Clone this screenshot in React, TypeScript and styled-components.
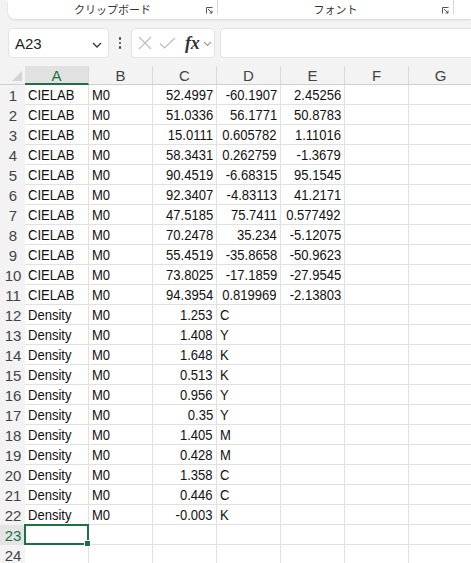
import React from "react";
import styled, { createGlobalStyle } from "styled-components";

const Global = createGlobalStyle`
  html, body { margin: 0; padding: 0; background: #f3f3f3; overflow: hidden; }
  #root { width: 471px; height: 563px; overflow: hidden; }
`;

const Page = styled.div`
  width: 471px;
  height: 563px;
  background: #f3f3f3;
  display: flex;
  flex-direction: column;
  overflow: hidden;
  font-family: "Liberation Sans", Arial, sans-serif;
`;

const Ribbon = styled.div`
  margin-left: 8px;
  height: 19px;
  background: #ffffff;
  border-radius: 0 0 0 7px;
  box-shadow: 0 1px 2px rgba(0, 0, 0, 0.12);
  display: flex;
  align-items: stretch;
  flex-shrink: 0;
`;

const RibbonGroup = styled.div<{ $w: number }>`
  width: ${(p) => p.$w}px;
  flex-shrink: 0;
  position: relative;
  display: flex;
  justify-content: center;
  align-items: center;
  font-family: "Noto Sans CJK JP", sans-serif;
  font-size: 11px;
  color: #333;
  padding-bottom: 2px;
  box-sizing: border-box;
`;

const Sep = styled.div`
  width: 1px;
  height: 14px;
  background: #d6d6d6;
  flex-shrink: 0;
`;

const Launcher = styled.svg`
  position: absolute;
  right: 4px;
  top: 7px;
`;

const FormulaBar = styled.div`
  margin: 9px 0 0 8px;
  height: 30px;
  display: flex;
  align-items: stretch;
  flex-shrink: 0;
`;

const Box = styled.div<{ $w?: number }>`
  background: #fff;
  border: 1px solid #e3e3e3;
  border-radius: 4px;
  box-sizing: border-box;
  ${(p) => (p.$w ? `width: ${p.$w}px; flex-shrink: 0;` : "flex: 1; border-right: none; border-radius: 4px 0 0 4px;")}
  display: flex;
  align-items: center;
`;

const NameText = styled.span`
  font-size: 15px;
  color: #222;
  padding-left: 6px;
  flex: 1;
`;

const Dots = styled.div`
  width: 22px;
  flex-shrink: 0;
  display: flex;
  flex-direction: column;
  align-items: center;
  justify-content: center;
  gap: 2px;
  & span {
    width: 2.5px;
    height: 2.5px;
    border-radius: 50%;
    background: #444;
  }
`;

const Fx = styled.span`
  font-family: "Liberation Serif", serif;
  font-style: italic;
  font-weight: bold;
  font-size: 18px;
  color: #333;
  margin-left: 9px;
  letter-spacing: -0.3px;
`;

const Gap = styled.div<{ $w: number }>`
  width: ${(p) => p.$w}px;
  flex-shrink: 0;
`;

const Sheet = styled.div`
  margin-top: 8px;
  display: grid;
  grid-template-columns: 25px repeat(7, 64px);
  grid-auto-rows: 20px;
  grid-template-rows: 19px;
`;

const Corner = styled.div`
  position: relative;
  border-bottom: 1px solid #d0d0d0;
  box-sizing: border-box;
  &::after {
    content: "";
    position: absolute;
    right: 3px;
    bottom: 3px;
    width: 0;
    height: 0;
    border-left: 10px solid transparent;
    border-bottom: 10px solid #d4d4d4;
  }
`;

const ColHead = styled.div<{ $sel?: boolean }>`
  box-sizing: border-box;
  background: ${(p) => (p.$sel ? "#e1e1e1" : "transparent")};
  border-right: 1px solid #dadada;
  border-bottom: ${(p) => (p.$sel ? "2px solid #1e7145" : "1px solid #d0d0d0")};
  color: ${(p) => (p.$sel ? "#1e7145" : "#444")};
  font-size: 15px;
  display: flex;
  align-items: center;
  justify-content: center;
  padding-top: ${(p) => (p.$sel ? "1px" : "0")};
`;

const RowHead = styled.div<{ $sel?: boolean }>`
  box-sizing: border-box;
  background: ${(p) => (p.$sel ? "#e4e4e4" : "transparent")};
  color: ${(p) => (p.$sel ? "#1e7145" : "#444")};
  font-size: 15px;
  display: flex;
  align-items: center;
  justify-content: center;
  padding-left: 1px;
`;

const Cell = styled.div<{ $align?: "left" | "right"; $sel?: boolean }>`
  box-sizing: border-box;
  background: #fff;
  border-right: 1px solid #e1e1e1;
  border-bottom: 1px solid #e1e1e1;
  font-size: 15px;
  color: #111;
  display: flex;
  align-items: center;
  justify-content: ${(p) => (p.$align === "right" ? "flex-end" : "flex-start")};
  padding: 0 3px;
  white-space: nowrap;
  overflow: visible;
  position: relative;
  ${(p) =>
    p.$sel
      ? `
    &::after {
      content: "";
      position: absolute;
      left: -1px; top: -1px; right: -1px; bottom: -1px;
      border: 2px solid #1e7145;
    }
    &::before {
      content: "";
      position: absolute;
      right: -3px; bottom: -3px;
      width: 5px; height: 5px;
      background: #1e7145;
      border: 1px solid #fff;
      z-index: 2;
    }`
      : ""}
`;

const Txt = styled.span<{ $align?: "left" | "right" }>`
  display: inline-block;
  transform: scaleX(0.87);
  transform-origin: ${(p) => (p.$align === "right" ? "right" : "left")} center;
`;

type Row = [string, string, string, string, string];

const rows: Row[] = [
  ["CIELAB", "M0", "52.4997", "-60.1907", "2.45256"],
  ["CIELAB", "M0", "51.0336", "56.1771", "50.8783"],
  ["CIELAB", "M0", "15.0111", "0.605782", "1.11016"],
  ["CIELAB", "M0", "58.3431", "0.262759", "-1.3679"],
  ["CIELAB", "M0", "90.4519", "-6.68315", "95.1545"],
  ["CIELAB", "M0", "92.3407", "-4.83113", "41.2171"],
  ["CIELAB", "M0", "47.5185", "75.7411", "0.577492"],
  ["CIELAB", "M0", "70.2478", "35.234", "-5.12075"],
  ["CIELAB", "M0", "55.4519", "-35.8658", "-50.9623"],
  ["CIELAB", "M0", "73.8025", "-17.1859", "-27.9545"],
  ["CIELAB", "M0", "94.3954", "0.819969", "-2.13803"],
  ["Density", "M0", "1.253", "C", ""],
  ["Density", "M0", "1.408", "Y", ""],
  ["Density", "M0", "1.648", "K", ""],
  ["Density", "M0", "0.513", "K", ""],
  ["Density", "M0", "0.956", "Y", ""],
  ["Density", "M0", "0.35", "Y", ""],
  ["Density", "M0", "1.405", "M", ""],
  ["Density", "M0", "0.428", "M", ""],
  ["Density", "M0", "1.358", "C", ""],
  ["Density", "M0", "0.446", "C", ""],
  ["Density", "M0", "-0.003", "K", ""],
  ["", "", "", "", ""],
  ["", "", "", "", ""],
];

const isNum = (s: string) => /^-?\d/.test(s);

const LauncherIcon = () => (
  <Launcher width="7" height="7" viewBox="0 0 7 7">
    <path d="M0.5 6.5V0.5H6.5" fill="none" stroke="#555" strokeWidth="1" />
    <path d="M2 2L6 6M6 3.5V6H3.5" fill="none" stroke="#555" strokeWidth="1" />
  </Launcher>
);

export default function App() {
  return (
    <Page>
      <Global />
      <Ribbon>
        <RibbonGroup $w={209}>
          クリップボード
          <LauncherIcon />
        </RibbonGroup>
        <Sep />
        <RibbonGroup $w={235}>
          フォント
          <LauncherIcon />
        </RibbonGroup>
        <Sep />
        <RibbonGroup $w={40} />
      </Ribbon>
      <FormulaBar>
        <Box $w={101}>
          <NameText>A23</NameText>
          <svg width="10" height="6" viewBox="0 0 10 6" style={{ marginRight: 6, marginTop: 3 }}>
            <path d="M1 1L5 5L9 1" fill="none" stroke="#333" strokeWidth="1.3" />
          </svg>
        </Box>
        <Dots>
          <span />
          <span />
          <span />
        </Dots>
        <Box $w={84}>
          <svg width="14" height="14" viewBox="0 0 14 14" style={{ marginLeft: 6 }}>
            <path d="M1 1L13 13M13 1L1 13" stroke="#bdbdbd" strokeWidth="1.2" />
          </svg>
          <svg width="17" height="12" viewBox="0 0 17 12" style={{ marginLeft: 7 }}>
            <path d="M1 6.5L5.5 11L16 1" fill="none" stroke="#bdbdbd" strokeWidth="1.2" />
          </svg>
          <Fx>fx</Fx>
          <svg width="9" height="6" viewBox="0 0 9 6" style={{ marginLeft: 4, marginTop: 2 }}>
            <path d="M1 1L4.5 4.5L8 1" fill="none" stroke="#999" strokeWidth="1.1" />
          </svg>
        </Box>
        <Gap $w={5} />
        <Box />
      </FormulaBar>
      <Sheet>
        <Corner />
        {["A", "B", "C", "D", "E", "F", "G"].map((c) => (
          <ColHead key={c} $sel={c === "A"}>
            {c}
          </ColHead>
        ))}
        {rows.map((r, i) => (
          <React.Fragment key={i}>
            <RowHead $sel={i === 22}>{i + 1}</RowHead>
            {r.map((v, j) => {
              const a = isNum(v) ? "right" : "left";
              return (
                <Cell key={j} $align={a} $sel={i === 22 && j === 0}>
                  {v && <Txt $align={a}>{v}</Txt>}
                </Cell>
              );
            })}
            <Cell />
            <Cell />
          </React.Fragment>
        ))}
      </Sheet>
    </Page>
  );
}
